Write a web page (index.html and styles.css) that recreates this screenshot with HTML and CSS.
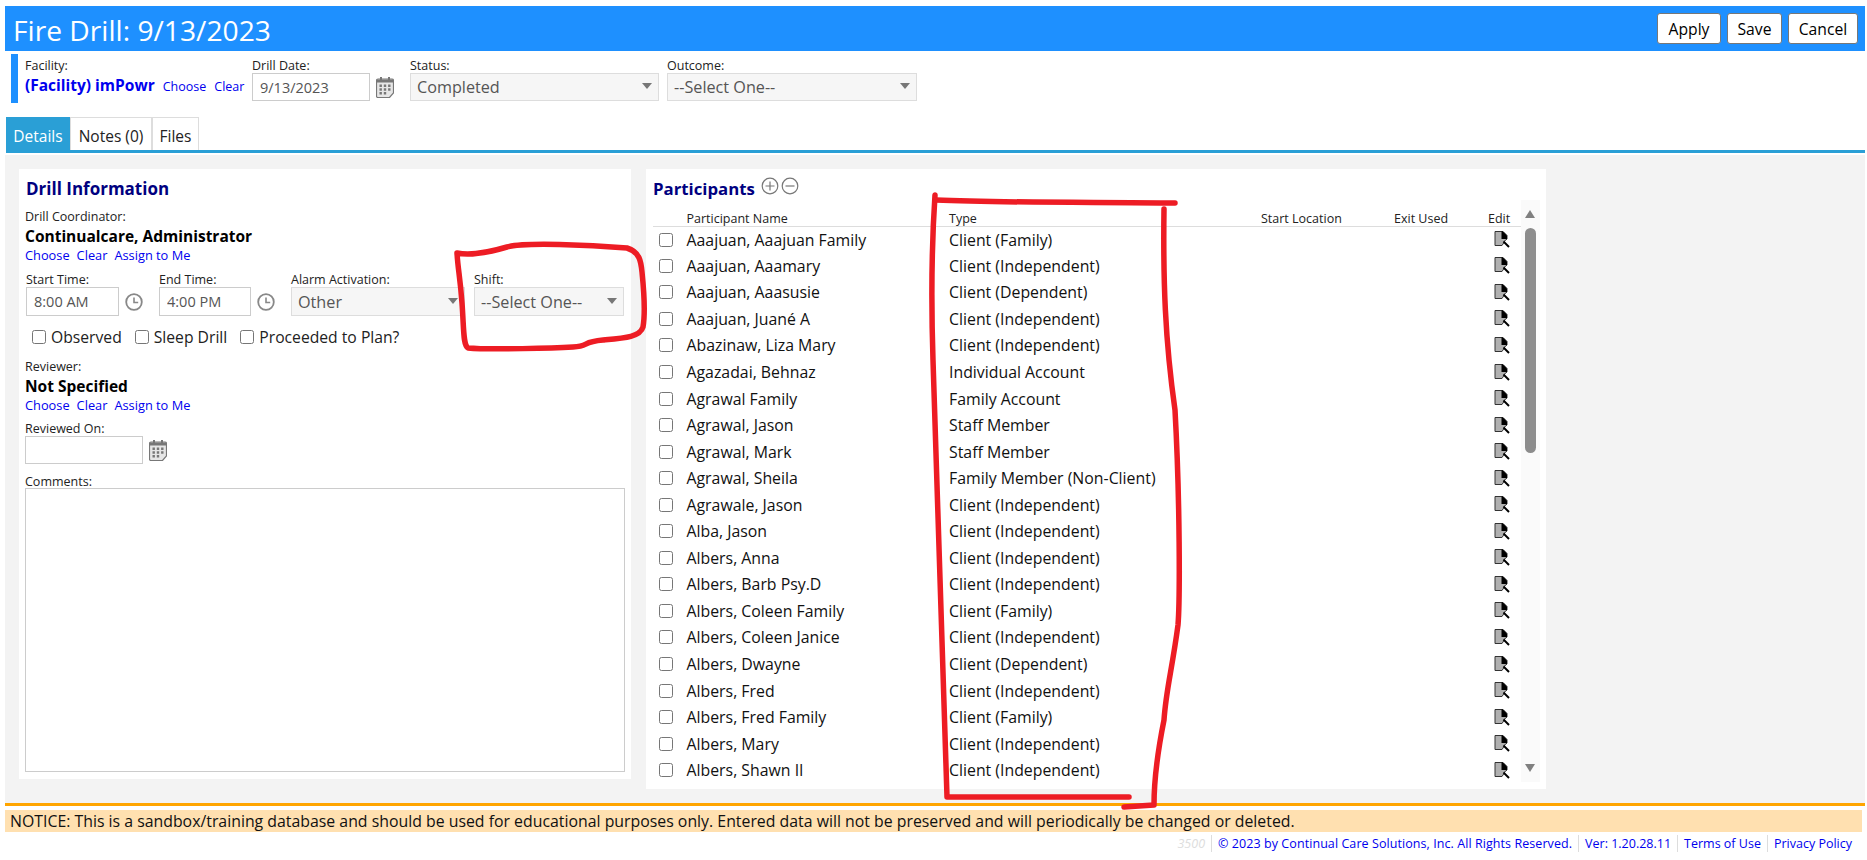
FILE: index.html
```html
<!DOCTYPE html>
<html lang="en">
<head>
    <meta charset="UTF-8">
    <title>Fire Drill: 9/13/2023</title>
    <link rel="stylesheet" href="styles.css">
</head>
<body>
    <svg class="icon-defs" width="0" height="0">
        <symbol id="icon-calendar" viewBox="0 0 18 22">
            <path d="M2 3h14a1.500 1.500 0 0 1 1.500 1.500V17l-4 4.500H2A1.500 1.500 0 0 1 .5 20V4.500A1.500 1.500 0 0 1 2 3z" fill="#e6e6e6" stroke="#777" stroke-width="1.200"/>
            <rect x="4" y="1" width="2" height="3.500" fill="#777"/>
            <rect x="12" y="1" width="2" height="3.500" fill="#777"/>
            <rect x="1" y="3.500" width="16" height="3" fill="#777"/>
            <path d="M3.500 8.500h2.400v2.400H3.500zM7.800 8.500h2.400v2.400H7.800zM12.100 8.500h2.400v2.400h-2.400zM3.500 12.300h2.400v2.400H3.500zM7.800 12.300h2.400v2.400H7.800zM12.100 12.300h2.400v2.400h-2.400zM3.500 16.100h2.400v2.400H3.500zM7.800 16.100h2.400v2.400H7.800z" fill="#777"/>
        </symbol>
        <symbol id="icon-clock" viewBox="0 0 18 18">
            <circle cx="9" cy="9" r="7.800" fill="none" stroke="#888" stroke-width="1.800"/>
            <path d="M9 4.500v5h4.200" fill="none" stroke="#888" stroke-width="1.600"/>
        </symbol>
        <symbol id="icon-edit" viewBox="0 0 16 17">
            <path d="M1 .5h8l4 4v3.500l-3 2.500v1l-2 3H1z" fill="#b0b0b0" stroke="#333" stroke-width="1"/>
            <path d="M7.500 .5H9l4 4v3.500H7.500z" fill="#000"/>
            <path d="M9.500 10.500l5.500 5.500" stroke="#000" stroke-width="2"/>
        </symbol>
    </svg>

    <div class="page">
        <header class="title-bar">
            <h1>Fire Drill: 9/13/2023</h1>
            <div class="title-actions">
                <button class="btn-apply">Apply</button>
                <button class="btn-save">Save</button>
                <button class="btn-cancel">Cancel</button>
            </div>
        </header>

        <div class="summary">
            <div class="facility">
                <label>Facility:</label>
                <div class="facility-name">
                    <a href="#" class="facility-link">(Facility) imPowr</a>
                    <a href="#">Choose</a>
                    <a href="#">Clear</a>
                </div>
            </div>
            <div class="field field-date">
                <label>Drill Date:</label>
                <div class="with-icon">
                    <input type="text" class="input-drill-date" value="9/13/2023">
                    <svg class="icon-calendar"><use href="#icon-calendar"/></svg>
                </div>
            </div>
            <div class="field">
                <label>Status:</label>
                <div class="select select-status">Completed</div>
            </div>
            <div class="field">
                <label>Outcome:</label>
                <div class="select select-outcome">--Select One--</div>
            </div>
        </div>

        <nav class="tabs">
            <a href="#" class="tab tab-details active">Details</a>
            <a href="#" class="tab tab-notes">Notes (0)</a>
            <a href="#" class="tab tab-files">Files</a>
        </nav>

        <main class="content">
            <section class="panel drill-info">
                <h2>Drill Information</h2>
                <label class="coordinator-label">Drill Coordinator:</label>
                <div class="person">Continualcare, Administrator</div>
                <div class="links">
                    <a href="#">Choose</a>
                    <a href="#">Clear</a>
                    <a href="#">Assign to Me</a>
                </div>

                <div class="time-row">
                    <div class="field">
                        <label>Start Time:</label>
                        <div class="with-icon">
                            <input type="text" class="input-start" value="8:00 AM">
                            <svg class="icon-clock"><use href="#icon-clock"/></svg>
                        </div>
                    </div>
                    <div class="field">
                        <label>End Time:</label>
                        <div class="with-icon">
                            <input type="text" class="input-end" value="4:00 PM">
                            <svg class="icon-clock"><use href="#icon-clock"/></svg>
                        </div>
                    </div>
                    <div class="field field-alarm">
                        <label>Alarm Activation:</label>
                        <div class="select select-alarm">Other</div>
                    </div>
                    <div class="field">
                        <label>Shift:</label>
                        <div class="select select-shift">--Select One--</div>
                    </div>
                </div>

                <div class="checks">
                    <label><input type="checkbox">Observed</label>
                    <label><input type="checkbox">Sleep Drill</label>
                    <label><input type="checkbox">Proceeded to Plan?</label>
                </div>

                <label class="reviewer-label">Reviewer:</label>
                <div class="person">Not Specified</div>
                <div class="links">
                    <a href="#">Choose</a>
                    <a href="#">Clear</a>
                    <a href="#">Assign to Me</a>
                </div>

                <label class="reviewed-label">Reviewed On:</label>
                <div class="with-icon">
                    <input type="text" class="input-reviewed">
                    <svg class="icon-calendar"><use href="#icon-calendar"/></svg>
                </div>

                <label class="comments-label">Comments:</label>
                <textarea class="comments"></textarea>
            </section>

            <section class="panel participants">
                <div class="participants-title">
                    <h2>Participants</h2>
                    <svg class="icon-round" viewBox="0 0 18 18"><circle cx="9" cy="9" r="7.800" fill="none" stroke="#777" stroke-width="1.200"/><path d="M4.500 9h9M9 4.500v9" stroke="#777" stroke-width="1.200"/></svg>
                    <svg class="icon-round" viewBox="0 0 18 18"><circle cx="9" cy="9" r="7.800" fill="none" stroke="#777" stroke-width="1.200"/><path d="M4.500 9h9" stroke="#777" stroke-width="1.200"/></svg>
                </div>
                <div class="grid-wrap">
                    <table class="grid">
                        <thead>
                            <tr><th class="col-check"></th><th class="col-name">Participant Name</th><th class="col-type">Type</th><th class="col-start">Start Location</th><th class="col-exit">Exit Used</th><th class="col-edit">Edit</th></tr>
                        </thead>
                        <tbody>
                            <tr><td><input type="checkbox"></td><td>Aaajuan, Aaajuan Family</td><td>Client (Family)</td><td></td><td></td><td class="col-edit"><svg class="icon-edit"><use href="#icon-edit"/></svg></td></tr>
                            <tr><td><input type="checkbox"></td><td>Aaajuan, Aaamary</td><td>Client (Independent)</td><td></td><td></td><td class="col-edit"><svg class="icon-edit"><use href="#icon-edit"/></svg></td></tr>
                            <tr><td><input type="checkbox"></td><td>Aaajuan, Aaasusie</td><td>Client (Dependent)</td><td></td><td></td><td class="col-edit"><svg class="icon-edit"><use href="#icon-edit"/></svg></td></tr>
                            <tr><td><input type="checkbox"></td><td>Aaajuan, Juané A</td><td>Client (Independent)</td><td></td><td></td><td class="col-edit"><svg class="icon-edit"><use href="#icon-edit"/></svg></td></tr>
                            <tr><td><input type="checkbox"></td><td>Abazinaw, Liza Mary</td><td>Client (Independent)</td><td></td><td></td><td class="col-edit"><svg class="icon-edit"><use href="#icon-edit"/></svg></td></tr>
                            <tr><td><input type="checkbox"></td><td>Agazadai, Behnaz</td><td>Individual Account</td><td></td><td></td><td class="col-edit"><svg class="icon-edit"><use href="#icon-edit"/></svg></td></tr>
                            <tr><td><input type="checkbox"></td><td>Agrawal Family</td><td>Family Account</td><td></td><td></td><td class="col-edit"><svg class="icon-edit"><use href="#icon-edit"/></svg></td></tr>
                            <tr><td><input type="checkbox"></td><td>Agrawal, Jason</td><td>Staff Member</td><td></td><td></td><td class="col-edit"><svg class="icon-edit"><use href="#icon-edit"/></svg></td></tr>
                            <tr><td><input type="checkbox"></td><td>Agrawal, Mark</td><td>Staff Member</td><td></td><td></td><td class="col-edit"><svg class="icon-edit"><use href="#icon-edit"/></svg></td></tr>
                            <tr><td><input type="checkbox"></td><td>Agrawal, Sheila</td><td>Family Member (Non-Client)</td><td></td><td></td><td class="col-edit"><svg class="icon-edit"><use href="#icon-edit"/></svg></td></tr>
                            <tr><td><input type="checkbox"></td><td>Agrawale, Jason</td><td>Client (Independent)</td><td></td><td></td><td class="col-edit"><svg class="icon-edit"><use href="#icon-edit"/></svg></td></tr>
                            <tr><td><input type="checkbox"></td><td>Alba, Jason</td><td>Client (Independent)</td><td></td><td></td><td class="col-edit"><svg class="icon-edit"><use href="#icon-edit"/></svg></td></tr>
                            <tr><td><input type="checkbox"></td><td>Albers, Anna</td><td>Client (Independent)</td><td></td><td></td><td class="col-edit"><svg class="icon-edit"><use href="#icon-edit"/></svg></td></tr>
                            <tr><td><input type="checkbox"></td><td>Albers, Barb Psy.D</td><td>Client (Independent)</td><td></td><td></td><td class="col-edit"><svg class="icon-edit"><use href="#icon-edit"/></svg></td></tr>
                            <tr><td><input type="checkbox"></td><td>Albers, Coleen Family</td><td>Client (Family)</td><td></td><td></td><td class="col-edit"><svg class="icon-edit"><use href="#icon-edit"/></svg></td></tr>
                            <tr><td><input type="checkbox"></td><td>Albers, Coleen Janice</td><td>Client (Independent)</td><td></td><td></td><td class="col-edit"><svg class="icon-edit"><use href="#icon-edit"/></svg></td></tr>
                            <tr><td><input type="checkbox"></td><td>Albers, Dwayne</td><td>Client (Dependent)</td><td></td><td></td><td class="col-edit"><svg class="icon-edit"><use href="#icon-edit"/></svg></td></tr>
                            <tr><td><input type="checkbox"></td><td>Albers, Fred</td><td>Client (Independent)</td><td></td><td></td><td class="col-edit"><svg class="icon-edit"><use href="#icon-edit"/></svg></td></tr>
                            <tr><td><input type="checkbox"></td><td>Albers, Fred Family</td><td>Client (Family)</td><td></td><td></td><td class="col-edit"><svg class="icon-edit"><use href="#icon-edit"/></svg></td></tr>
                            <tr><td><input type="checkbox"></td><td>Albers, Mary</td><td>Client (Independent)</td><td></td><td></td><td class="col-edit"><svg class="icon-edit"><use href="#icon-edit"/></svg></td></tr>
                            <tr><td><input type="checkbox"></td><td>Albers, Shawn II</td><td>Client (Independent)</td><td></td><td></td><td class="col-edit"><svg class="icon-edit"><use href="#icon-edit"/></svg></td></tr>
                        </tbody>
                    </table>
                    <div class="scrollbar">
                        <span class="arrow-up"></span>
                        <span class="thumb"></span>
                        <span class="arrow-down"></span>
                    </div>
                </div>
            </section>
        </main>

        <div class="notice-rule"></div>
        <div class="notice">NOTICE: This is a sandbox/training database and should be used for educational purposes only. Entered data will not be preserved and will periodically be changed or deleted.</div>
        <footer class="footer">
            <span class="build">3500</span>
            <a href="#" class="copyright">&copy; 2023 by Continual Care Solutions, Inc. All Rights Reserved.</a>
            <a href="#">Ver: 1.20.28.11</a>
            <a href="#">Terms of Use</a>
            <a href="#">Privacy Policy</a>
        </footer>
    </div>

    <!-- red marker strokes drawn over the page -->
    <svg class="marks" viewBox="0 0 1867 860">
        <path class="mark" d="M457 253C470 256 490 252 507 247S590 245 627 248C640 252 641 262 642 272S646 310 643 327C640 337 625 338 603 340S590 346 573 347S490 350 468 348C463 345 464 330 462 303S458 270 457 253"/>
        <path class="mark" d="M935 195C932 240 931 300 933 360C935 450 942 600 947 797L1129 797"/>
        <path class="mark" d="M936 200C1000 203 1100 202 1175 203"/>
        <path class="mark" d="M1164 209C1163 280 1165 340 1175 410C1180 500 1180 600 1178 625C1172 670 1166 690 1164 720C1158 750 1154 780 1154 805L1124 807"/>
    </svg>
</body>
</html>
```

FILE: styles.css
```css
* {
    box-sizing: border-box;
}
body {
    margin: 0;
    height: 860px;
    overflow: hidden;
    background: white;
    color: black;
    font-family: "Open Sans", Arial, sans-serif;
    font-size: 15.85px;
}
a {
    color: #0000ee;
    text-decoration: none;
}
label {
    display: block;
    font-size: 12.5px;
    line-height: 15px;
    color: #222;
}
input, textarea, button {
    font-family: inherit;
}
.icon-defs {
    position: absolute;
}
.page {
    width: 1860px;
    margin-left: 5px;
    padding-top: 6px;
}

/* title bar */
.title-bar {
    display: flex;
    justify-content: space-between;
    align-items: center;
    height: 45px;
    padding: 0 7px 0 8px;
    background: #1e90ff;
}
.title-bar h1 {
    margin: 0;
    padding-top: 2px;
    font-size: 28.2px;
    font-weight: 400;
    color: white;
}
.title-actions {
    display: flex;
    gap: 6px;
}
.title-actions button {
    height: 31px;
    padding: 0;
    background: white;
    border: 1px solid #777;
    border-radius: 3px;
    font-size: 15.7px;
    color: black;
}
.btn-apply {
    width: 64px;
}
.btn-save {
    width: 55px;
}
.btn-cancel {
    width: 70px;
}

/* summary row */
.summary {
    display: flex;
    height: 49px;
    margin: 3px 0 0 6px;
    border-left: 7px solid #1e90ff;
}
.facility {
    width: 234px;
    padding: 4px 0 0 7px;
}
.facility-name {
    display: flex;
    align-items: baseline;
    gap: 8px;
    margin-top: 1px;
    font-size: 12.5px;
}
.facility-link {
    font-size: 15.5px;
    font-weight: 700;
}
.summary .field {
    padding-top: 4px;
    margin-right: 8px;
}
.summary .field-date {
    margin-right: 16px;
}
.field input, .with-icon input {
    display: block;
    height: 28px;
    padding: 0 7px;
    border: 1px solid #ccc;
    font-size: 14.5px;
    color: #555;
    outline: none;
}
.with-icon {
    display: flex;
    align-items: center;
    gap: 6px;
}
.input-drill-date {
    width: 118px;
}
.input-start {
    width: 93px;
}
.input-end {
    width: 92px;
}
.input-reviewed {
    width: 118px;
}
.icon-calendar {
    width: 18px;
    height: 22px;
}
.icon-clock {
    width: 18px;
    height: 18px;
}
.select {
    position: relative;
    height: 28px;
    padding: 0 6px;
    background: #f6f6f6;
    border: 1px solid #ddd;
    font-size: 16.2px;
    line-height: 27px;
    color: #555;
}
.select::after {
    content: "";
    position: absolute;
    top: 9px;
    right: 6px;
    border-left: 5px solid transparent;
    border-right: 5px solid transparent;
    border-top: 6px solid #777;
}
.select-status {
    width: 249px;
}
.select-outcome {
    width: 250px;
}
.select-alarm {
    width: 174px;
}
.select-shift {
    width: 150px;
}

/* tabs */
.tabs {
    display: flex;
    height: 36px;
    margin: 14px 0 0 1px;
    border-bottom: 3px solid #2a9fd6;
}
.tab {
    height: 33px;
    border: 1px solid #ddd;
    border-bottom: 0;
    font-size: 15.5px;
    line-height: 36px;
    text-align: center;
    color: #222;
}
.tab-details {
    width: 64px;
}
.tab-notes {
    width: 82px;
}
.tab-files {
    width: 47px;
}
.tab.active {
    background: #2a9fd6;
    border-color: #2a9fd6;
    color: white;
}

/* content */
.content {
    display: flex;
    align-items: flex-start;
    gap: 15px;
    height: 648px;
    margin-top: 2px;
    padding: 14px 0 0 14px;
    background: #f3f3f3;
}
.panel {
    background: white;
}
.panel h2 {
    margin: 0;
    font-size: 17px;
    line-height: 23px;
    font-weight: 700;
    color: #000080;
}
.drill-info {
    width: 612px;
    height: 610px;
    padding: 8px 6px 0 6px;
}
.drill-info h2 {
    margin-left: 1px;
}
.coordinator-label {
    margin-top: 9px;
}
.person {
    margin-top: 2px;
    font-size: 15.5px;
    line-height: 20px;
    font-weight: 700;
}
.links {
    display: flex;
    gap: 7px;
    font-size: 12.8px;
    line-height: 18px;
}
.time-row {
    display: flex;
    gap: 16px;
    margin: 8px 0 0 1px;
}
.field-alarm {
    margin-right: -7px;
}
.time-row .field input {
    height: 29px;
}
.time-row .select {
    height: 29px;
    line-height: 28px;
}
.time-row .select::after {
    top: 10px;
}
.checks {
    display: flex;
    gap: 13px;
    margin: 8px 0 0 7px;
}
.checks label {
    display: flex;
    align-items: center;
    font-size: 15.7px;
    line-height: 26px;
}
input[type="checkbox"] {
    width: 14px;
    height: 14px;
    margin: 0 5px 0 0;
}
.reviewer-label {
    margin-top: 9px;
}
.reviewed-label {
    margin-top: 7px;
}
.comments-label {
    margin-top: 10px;
}
.comments {
    display: block;
    width: 600px;
    height: 284px;
    margin-top: -1px;
    border: 1px solid #ccc;
    resize: none;
}

/* participants */
.participants {
    width: 900px;
    height: 620px;
    padding: 6px 5px 0 5px;
}
.participants-title {
    display: flex;
    gap: 2px;
    height: 31px;
    padding-left: 2px;
}
.participants-title h2 {
    margin: 2px 4px 0 0;
    font-size: 16.8px;
}
.icon-round {
    width: 18px;
    height: 18px;
    margin-top: 2px;
}
.grid-wrap {
    display: flex;
    align-items: flex-start;
}
.grid {
    width: 868px;
    margin-left: 2px;
    border-collapse: collapse;
    table-layout: fixed;
}
.grid th {
    height: 20px;
    padding: 0;
    border-bottom: 1px solid #ddd;
    font-size: 12.5px;
    line-height: 15px;
    font-weight: 400;
    text-align: left;
    vertical-align: bottom;
    color: #222;
}
.grid td {
    height: 26.55px;
    padding: 0;
    color: #111;
}
.grid td:first-child {
    padding-left: 6px;
}
.grid td input {
    display: block;
}
.col-check {
    width: 33.5px;
}
.col-name {
    width: 262.5px;
}
.col-type {
    width: 312px;
}
.col-start {
    width: 133px;
}
.col-exit {
    width: 94px;
}
.grid td.col-edit {
    padding-left: 6px;
}
.icon-edit {
    display: block;
    width: 16px;
    height: 17px;
}
.scrollbar {
    position: relative;
    width: 19px;
    height: 582px;
    margin-top: -6px;
    background: #fafafa;
}
.thumb {
    position: absolute;
    top: 28px;
    left: 4px;
    width: 11px;
    height: 225px;
    background: #8c8c8c;
    border-radius: 6px;
}
.arrow-up, .arrow-down {
    position: absolute;
    left: 4px;
    border-left: 5.5px solid transparent;
    border-right: 5.5px solid transparent;
}
.arrow-up {
    top: 10px;
    border-bottom: 8px solid #808080;
}
.arrow-down {
    bottom: 10px;
    border-top: 8px solid #808080;
}

/* bottom */
.notice-rule {
    height: 3px;
    background: #ffa500;
}
.notice {
    width: 1857px;
    height: 22px;
    margin-top: 4px;
    padding-left: 5px;
    background: #ffe0b0;
    line-height: 22px;
    color: #111;
}
.footer {
    display: flex;
    justify-content: flex-end;
    align-items: center;
    height: 22px;
    padding-right: 7px;
    font-size: 12.5px;
}
.footer a {
    padding: 0 6px;
    border-left: 1px solid #ddd;
}
.footer .copyright {
    letter-spacing: 0.07px;
}
.build {
    padding-right: 6px;
    font-style: italic;
    color: #ddd;
}

/* red marks */
.marks {
    position: absolute;
    top: 0;
    left: 0;
    width: 1867px;
    height: 860px;
    pointer-events: none;
}
.mark {
    fill: none;
    stroke: #ed1c24;
    stroke-width: 5.5;
    stroke-linecap: round;
    stroke-linejoin: round;
}
```
